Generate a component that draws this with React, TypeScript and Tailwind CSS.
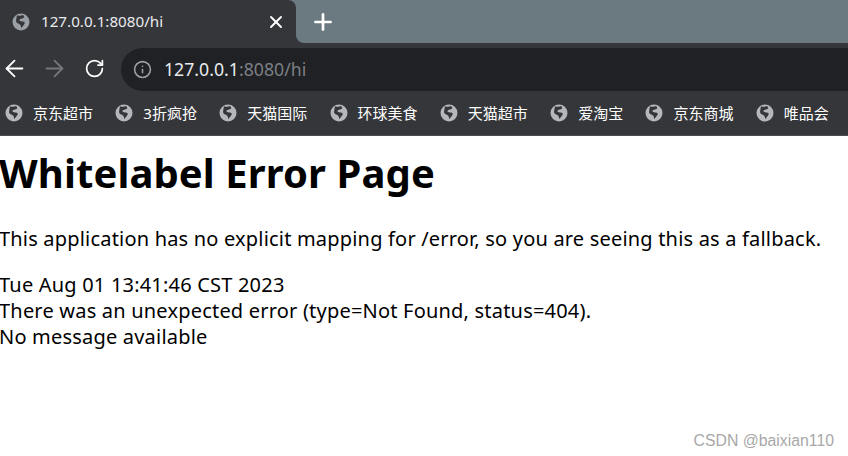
import { ArrowLeft, ArrowRight, Info, Plus, RotateCw, X } from "lucide-react";

const bookmarks = ["京东超市", "3折疯抢", "天猫国际", "环球美食", "天猫超市", "爱淘宝", "京东商城", "唯品会"];

function Globe({ className }: { className: string }) {
    return (
        <svg viewBox="0 0 18 18" className={className}>
            <circle cx="9" cy="9" r="8.5" fill="currentColor" />
            <path d="M5 2.200c2 .8 4.500.6 6.200-.3l1.200 2.300c-1.400 1.600-3.300 1.100-4.500 2.100-.9.800-.2 1.700 1 1.900l3 .5c1.300.3 1 2.200-.2 3.200l-2.300 3c-.5-1-.4-2.400-1.200-3.200-1-1-3-1.100-3.800-2.400C3.600 7.600 4.600 4.800 5 2.200z" fill="#35363a" />
        </svg>
    );
}

export default function App() {
    return (
        <div className="w-[848px] h-[456px] overflow-hidden bg-white relative font-['Noto_Sans','Noto_Sans_CJK_SC',sans-serif]">
            <div className="flex h-[43px] bg-[#6b7a80]">
                <div className="w-[296px] bg-[#35363a] rounded-tr-lg flex items-center pl-3 pr-[10px]">
                    <Globe className="w-[18px] h-[18px] text-[#9aa0a6]" />
                    <span className="ml-[11px] text-[15.2px] text-[#e8eaed]">127.0.0.1:8080/hi</span>
                    <X className="ml-auto w-5 h-5 text-white" strokeWidth={2.25} />
                </div>
                <div className="flex-1 bg-[#35363a]">
                    <div className="h-full bg-[#6b7a80] rounded-bl-lg flex items-center pl-[14px]">
                        <Plus className="w-[26px] h-[26px] text-white" strokeWidth={2.5} />
                    </div>
                </div>
            </div>
            <div className="h-[48px] bg-[#35363a] pt-[5px] flex">
                <div className="w-[121px] flex items-center pl-[1px] pb-[2px] shrink-0">
                    <ArrowLeft className="w-[27px] h-[27px] text-white" strokeWidth={1.6} />
                    <ArrowRight className="ml-[13px] w-[27px] h-[27px] text-[#74767a]" strokeWidth={1.6} />
                    <RotateCw className="ml-[16px] w-[21px] h-[21px] text-white" strokeWidth={2} />
                </div>
                <div className="flex-1 bg-[#202124] rounded-l-full flex items-center pl-[12px]">
                    <Info className="w-[19px] h-[19px] text-[#9aa0a6]" strokeWidth={2} />
                    <span className="ml-[12px] text-[17.7px] text-[#e8eaed]">127.0.0.1<span className="text-[#7c7f84]">:8080/hi</span></span>
                </div>
            </div>
            <div className="h-[45px] bg-[#35363a] border-b border-[#4a4c50] flex items-center pl-[5px]">
                {bookmarks.map((b) => (
                    <div key={b} className="flex items-center shrink-0 mr-[22.3px]">
                        <Globe className="w-[18px] h-[18px] text-[#b4b7bb]" />
                        <span className="ml-[10px] text-[15px] text-white whitespace-nowrap">{b}</span>
                    </div>
                ))}
            </div>
            <div className="text-black -ml-[1px]">
                <h1 className="text-[40px] font-bold leading-[50px] mt-[12px] tracking-[0.1px]">Whitelabel Error Page</h1>
                <p className="text-[20px] leading-[26px] mt-[28px] tracking-[0.19px]">This application has no explicit mapping for /error, so you are seeing this as a fallback.</p>
                <div className="text-[20px] leading-[26px] mt-[20px] tracking-[0.2px]">
                    <div>Tue Aug 01 13:41:46 CST 2023</div>
                    <div>There was an unexpected error (type=Not Found, status=404).</div>
                    <div>No message available</div>
                </div>
            </div>
            <div className="absolute right-[14px] top-[429px] text-[15.8px] text-[#a8a8a8] font-['Liberation_Sans',sans-serif]">CSDN @baixian110</div>
        </div>
    );
}
